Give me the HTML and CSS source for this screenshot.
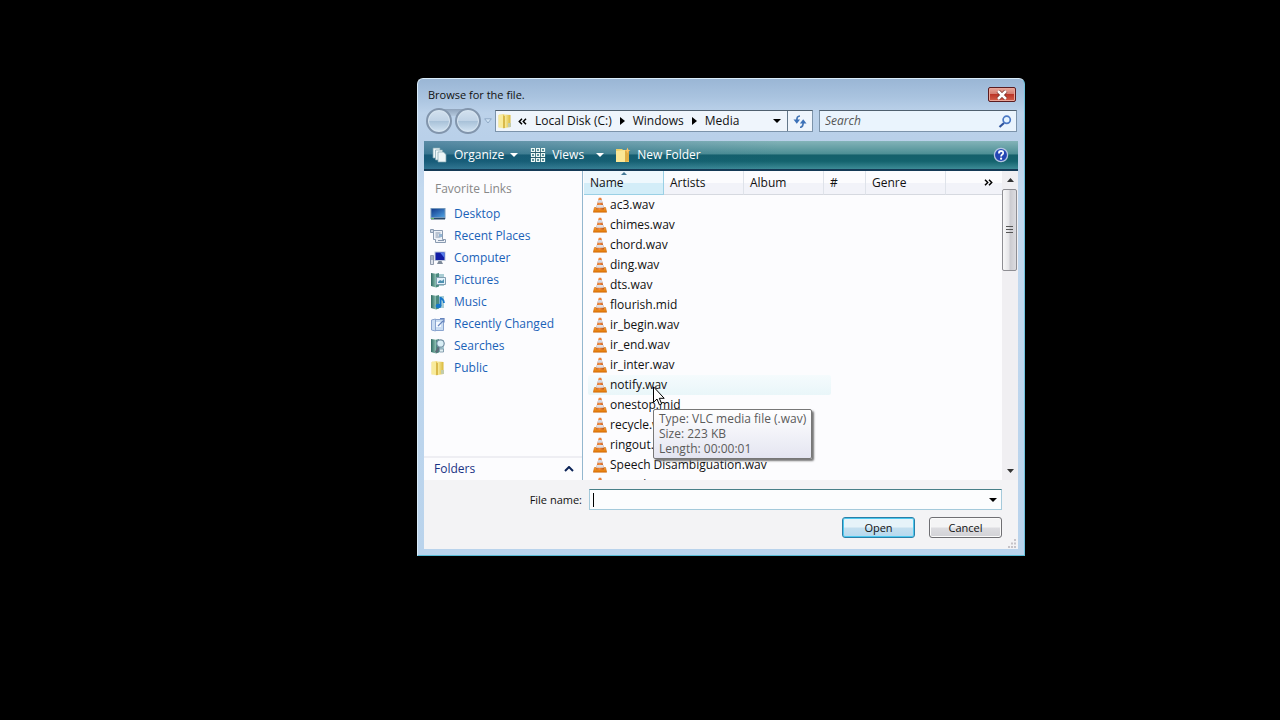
FILE: index.html
```html
<!DOCTYPE html>
<html lang="en">
<head>
<meta charset="utf-8">
<title>Browse for the file.</title>
<link rel="stylesheet" href="styles.css">
</head>
<body>
<svg class="defs" aria-hidden="true">
  <defs>
    <linearGradient id="cone" x1="0" x2="1"><stop offset="0" stop-color="#c86a30"/><stop offset=".45" stop-color="#f58a3c"/><stop offset="1" stop-color="#b9531c"/></linearGradient>
    <linearGradient id="base" x1="0" y1="0" x2="0" y2="1"><stop offset="0" stop-color="#f7a02c"/><stop offset="1" stop-color="#e07608"/></linearGradient>
    <linearGradient id="gold" x1="0" x2="1"><stop offset="0" stop-color="#f8eb9c"/><stop offset="1" stop-color="#d9b838"/></linearGradient>
    <linearGradient id="teal" x1="0" x2="1"><stop offset="0" stop-color="#2f6a62"/><stop offset="1" stop-color="#8fc3b4"/></linearGradient>
    <linearGradient id="screen" x1="0" x2="1" y2="1"><stop offset="0" stop-color="#123a8c"/><stop offset="1" stop-color="#4fa0e0"/></linearGradient>
  </defs>
  <symbol id="i-cone" viewBox="0 0 14 16">
    <path d="M1.500 10.500h11l1.200 4.700H.3z" fill="url(#base)" stroke="#d0690c" stroke-width=".6"/>
    <path d="M5.800.8h2.400l3 11.200c-1 1.200-7.400 1.200-8.400 0z" fill="url(#cone)"/>
    <path d="M5.300 3h3.400l.8 2.700h-5z" fill="#d5d8e2"/>
    <path d="M3.800 8h6.400l.7 2.700H3.100z" fill="#dfe0e6"/>
  </symbol>
  <symbol id="i-folder" viewBox="0 0 16 16">
    <path d="M1.500 2l6-1v13l-6 .5z" fill="#f2dc74"/>
    <path d="M2 1.500l4 .8v12.900L2 14z" fill="#f8eb9c"/>
    <path d="M6 2.300l2.500.7v12L6 15.200z" fill="#d9b94a"/>
    <path d="M8 1.500l5.500.5v12L8 15z" fill="url(#gold)"/>
    <path d="M11 10h3v4h-3z" fill="#c3ccaa"/>
  </symbol>
  <symbol id="i-book" viewBox="0 0 16 16">
    <path d="M1 1l5 .8v13.700L1 14z" fill="url(#teal)"/>
    <path d="M6 1.800L9 1v13.500l-3 1z" fill="#4c8a80"/>
    <path d="M9 2h5v12H9z" fill="#a9cdd4"/>
  </symbol>
</svg>

<section class="dialog" role="dialog" aria-labelledby="title">
  <header class="titlebar">
    <h1 id="title">Browse for the file.</h1>
    <button class="close" aria-label="Close"><svg width="12" height="10" viewBox="0 0 12 10"><path d="M2 1l8 8M10 1L2 9" stroke="#743029" stroke-width="4"/><path d="M2 1l8 8M10 1L2 9" stroke="#fff" stroke-width="2.500"/></svg></button>
  </header>

  <nav class="address-row" aria-label="Location">
    <div class="travel">
      <button class="orb" aria-label="Back"></button>
      <button class="orb" aria-label="Forward"></button>
      <button class="plain" aria-label="Recent pages"><svg width="8" height="6" viewBox="0 0 8 6"><path d="M.7.8h6.600L4 5z" fill="#cfe3f5" stroke="#8fa9c6"/></svg></button>
    </div>
    <div class="address">
      <svg class="icon" width="16" height="16"><use href="#i-folder"/></svg>
      <button class="plain crumb-more" aria-label="Parent folders"><svg width="9" height="7" viewBox="0 0 9 7"><path d="M4 .8L1.300 3.500 4 6.200M8 .8L5.300 3.500 8 6.200" fill="none" stroke="#000" stroke-width="1.500"/></svg></button>
      <a href="#">Local Disk (C:)</a>
      <svg width="5" height="8" viewBox="0 0 5 8"><path d="M0 0l5 4-5 4z"/></svg>
      <a href="#">Windows</a>
      <svg width="5" height="8" viewBox="0 0 5 8"><path d="M0 0l5 4-5 4z"/></svg>
      <a href="#">Media</a>
      <button class="plain history" aria-label="Previous locations"><svg width="8" height="4" viewBox="0 0 8 4"><path d="M0 0h8L4 4z"/></svg></button>
      <button class="plain refresh" aria-label="Refresh"><svg width="14" height="13" viewBox="0 0 14 13"><path d="M7 1C4.500 1 3.800 2.500 3.800 6" fill="none" stroke="#4173b4" stroke-width="1.700"/><path d="M.5 4.500h6.600L3.800 8.800z" fill="#3c71b8"/><path d="M7 12.300c2.500 0 3.200-1.500 3.200-5" fill="none" stroke="#4173b4" stroke-width="1.700"/><path d="M6.900 8.500h6.600l-3.300-4.300z" fill="#3c71b8"/></svg></button>
    </div>
    <div class="search">
      <input type="search" placeholder="Search" aria-label="Search">
      <svg width="14" height="13" viewBox="0 0 14 13"><path d="M6 8L1.500 12" stroke="#2e539c" stroke-width="2.200"/><circle cx="8.700" cy="4.800" r="3.600" fill="#e4f3ff" stroke="#4a78c4" stroke-width="1.700"/></svg>
    </div>
  </nav>

  <div class="toolbar" role="toolbar">
    <button class="tool organize">
      <svg width="16" height="16" viewBox="0 0 16 16"><g fill="#eef6f8" stroke="#80a5b0" stroke-width=".7"><path d="M1 1h7v10H1z"/><path d="M3.500 3h7v10h-7z"/><path d="M6 5h5.500L14 7.500V15H6z"/></g></svg>
      Organize
      <svg class="arrow" width="8" height="4" viewBox="0 0 8 4"><path d="M0 0h8L4 4z" fill="#fff"/></svg>
    </button>
    <button class="tool views">
      <svg width="16" height="16" viewBox="0 0 16 16"><path d="M1 1h14v14H1z" fill="#2b5f6d"/><g fill="#4c8791" stroke="#eef8f5" stroke-width="1.200"><path d="M1.500 1.500h3v3h-3zM6.500 1.500h3v3h-3zM11.500 1.500h3v3h-3zM1.500 6.500h3v3h-3zM6.500 6.500h3v3h-3zM11.500 6.500h3v3h-3zM1.500 11.500h3v3h-3zM6.500 11.500h3v3h-3zM11.500 11.500h3v3h-3z"/></g></svg>
      Views
      <svg class="arrow" width="8" height="4" viewBox="0 0 8 4"><path d="M0 0h8L4 4z" fill="#fff"/></svg>
    </button>
    <button class="tool">
      <svg width="16" height="16" viewBox="0 0 16 16"><path d="M1 2h6l1 1h6v12H1z" fill="#efd169"/><path d="M1 4l9-1v12H1z" fill="#fbe795"/><path d="M10 3h4v11l-4 1z" fill="#e0ae45"/><path d="M12.500.500l.8 2.200 2.200.8-2.200.8-.8 2.200-.8-2.200-2.200-.8 2.200-.8z" fill="#ffc566"/></svg>
      New Folder
    </button>
    <button class="plain help" aria-label="Help"><svg width="16" height="16" viewBox="0 0 16 16"><circle cx="8" cy="8" r="6.600" fill="#2445b4" stroke="#b6c6e2" stroke-width="1.300"/><path d="M5 4.500a4 3 0 0 1 6 0" fill="none" stroke="#7e9de5"/><path d="M5.900 6.400c0-3 4.300-2.900 4.300-.5 0 1.700-2.100 1.500-2.100 3.500" fill="none" stroke="#fff" stroke-width="1.700"/><circle cx="8.100" cy="11.700" r="1.100" fill="#fff"/></svg></button>
  </div>

  <div class="content">
    <aside class="sidebar">
      <h2>Favorite Links</h2>
      <ul>
        <li><a href="#"><svg width="16" height="16" viewBox="0 0 16 16"><path d="M.5 2h15v11H.5z" fill="#7498bb"/><path d="M1.500 3h13v8h-13z" fill="url(#screen)"/><path d="M1 12h14v1.500H1z" fill="#294867"/><path d="M1 12h3v1H1z" fill="#65b568"/></svg>Desktop</a></li>
        <li><a href="#"><svg width="16" height="16" viewBox="0 0 16 16"><path d="M3.500 2.500h9v9h3v3H5.500v-3h-2z" fill="#edf1f7" stroke="#8a9bb1"/><path d="M.5 1.500h3v3h-3z" fill="#cbd5e2" stroke="#8a9bb1"/><path d="M5.500 5h5M5.500 7h3M5.500 9h5M8 12.500h6" stroke="#8495ad"/><path d="M9 6h3v3H9z" fill="#93b4d2"/></svg>Recent Places</a></li>
        <li><a href="#"><svg width="16" height="16" viewBox="0 0 16 16"><path d="M.5 5.500h3v9h-3z" fill="#dce1ea" stroke="#8f9aac"/><path d="M1 7h2M1 9h2" stroke="#708099"/><path d="M4.500 1.500h11v9.500h-11z" fill="#bdc7da"/><path d="M5.500 2.500h9V10h-9z" fill="#111ca5"/><path d="M10 2.500h4.500V8z" fill="#547bea"/><path d="M8.500 11h3l1.500 3H7z" fill="#7d8999"/></svg>Computer</a></li>
        <li><a href="#"><svg width="16" height="16" viewBox="0 0 16 16"><use href="#i-book"/><path d="M6.500 5.500h9v7h-9z" fill="#e4f2fa" stroke="#819eaf"/><path d="M8 10l2-2 2 1 2-2v4H8z" fill="#4d91b1"/></svg>Pictures</a></li>
        <li><a href="#"><svg width="16" height="16" viewBox="0 0 16 16"><use href="#i-book"/><path d="M10.500 12V3c0 2 4 2 3.500 6" fill="none" stroke="#1677ca" stroke-width="1.800"/><ellipse cx="8.500" cy="12" rx="2.800" ry="2.200" fill="#1677ca"/></svg>Music</a></li>
        <li><a href="#"><svg width="16" height="16" viewBox="0 0 16 16"><path d="M1.500 4l4-1v12l-4-1zM5.500 3.500h8v11h-8z" fill="#c9dcf2" stroke="#8aa4cf"/><path d="M6 6h5v5H6z" fill="#f4f9ff"/><path d="M8 10l5-5M10 2.500h4v4" fill="none" stroke="#6684bd" stroke-width="1.200"/></svg>Recently Changed</a></li>
        <li><a href="#"><svg width="16" height="16" viewBox="0 0 16 16"><use href="#i-book"/><path d="M9 9L6 14.500" stroke="#5d6c79" stroke-width="2.500"/><circle cx="10.500" cy="5.500" r="3.700" fill="#d9eef5" stroke="#7590a3" stroke-width="1.200"/><path d="M9.500 11h4v3h-4z" fill="#e0eef1" stroke="#7590a3" stroke-width=".8"/></svg>Searches</a></li>
        <li><a href="#"><svg width="16" height="16"><use href="#i-folder"/></svg>Public</a></li>
      </ul>
      <button class="folders">Folders<svg width="10" height="6" viewBox="0 0 10 6"><path d="M1 5l4-4 4 4" fill="none" stroke="#0c2458" stroke-width="2"/></svg></button>
    </aside>

    <div class="listing">
      <table class="files">
        <thead>
          <tr><th class="c-name sorted">Name<svg class="sort" width="6" height="3" viewBox="0 0 6 3"><path d="M0 3l3-3 3 3z" fill="#477b98"/></svg></th><th class="c-artists">Artists</th><th class="c-album">Album</th><th class="c-num">#</th><th class="c-genre">Genre</th><th class="c-more"><button class="plain" aria-label="More columns"><svg width="9" height="7" viewBox="0 0 9 7"><path d="M1 .8l2.700 2.700L1 6.200M5 .8l2.700 2.700L5 6.200" fill="none" stroke="#000" stroke-width="1.500"/></svg></button></th></tr>
        </thead>
        <tbody>
          <tr><td colspan="6"><span class="file"><svg width="14" height="16"><use href="#i-cone"/></svg>ac3.wav</span></td></tr>
          <tr><td colspan="6"><span class="file"><svg width="14" height="16"><use href="#i-cone"/></svg>chimes.wav</span></td></tr>
          <tr><td colspan="6"><span class="file"><svg width="14" height="16"><use href="#i-cone"/></svg>chord.wav</span></td></tr>
          <tr><td colspan="6"><span class="file"><svg width="14" height="16"><use href="#i-cone"/></svg>ding.wav</span></td></tr>
          <tr><td colspan="6"><span class="file"><svg width="14" height="16"><use href="#i-cone"/></svg>dts.wav</span></td></tr>
          <tr><td colspan="6"><span class="file"><svg width="14" height="16"><use href="#i-cone"/></svg>flourish.mid</span></td></tr>
          <tr><td colspan="6"><span class="file"><svg width="14" height="16"><use href="#i-cone"/></svg>ir_begin.wav</span></td></tr>
          <tr><td colspan="6"><span class="file"><svg width="14" height="16"><use href="#i-cone"/></svg>ir_end.wav</span></td></tr>
          <tr><td colspan="6"><span class="file"><svg width="14" height="16"><use href="#i-cone"/></svg>ir_inter.wav</span></td></tr>
          <tr><td colspan="6"><div class="file hovered"><svg width="14" height="16"><use href="#i-cone"/></svg>notify.wav
            <div class="tooltip" role="tooltip">Type: VLC media file (.wav)<br>Size: 223 KB<br>Length: 00:00:01</div>
            <svg class="pointer" width="12" height="20" viewBox="0 0 12 20"><path d="M.5.8v15.500L4 13l2.400 5.800 2.300-1-2.400-5.500h4.900z" fill="#fff" stroke="#000"/></svg>
          </div></td></tr>
          <tr><td colspan="6"><span class="file"><svg width="14" height="16"><use href="#i-cone"/></svg>onestop.mid</span></td></tr>
          <tr><td colspan="6"><span class="file"><svg width="14" height="16"><use href="#i-cone"/></svg>recycle.wav</span></td></tr>
          <tr><td colspan="6"><span class="file"><svg width="14" height="16"><use href="#i-cone"/></svg>ringout.wav</span></td></tr>
          <tr><td colspan="6"><span class="file"><svg width="14" height="16"><use href="#i-cone"/></svg>Speech Disambiguation.wav</span></td></tr>
          <tr><td colspan="6"><span class="file"><svg width="14" height="16"><use href="#i-cone"/></svg>Speech Misrecognition.wav</span></td></tr>
        </tbody>
      </table>
    </div>

    <div class="scrollbar">
      <button class="plain" aria-label="Scroll up"><svg width="7" height="4" viewBox="0 0 7 4"><path d="M0 4l3.500-4L7 4z" fill="#333"/></svg></button>
      <div class="thumb"><svg width="7" height="8" viewBox="0 0 7 8"><path d="M0 .5h7M0 3.500h7M0 6.500h7" stroke="#555"/></svg></div>
      <button class="plain" aria-label="Scroll down"><svg width="7" height="4" viewBox="0 0 7 4"><path d="M0 0l3.500 4L7 0z" fill="#333"/></svg></button>
    </div>
  </div>

  <footer class="footer">
    <div class="name-row">
      <label for="filename">File name:</label>
      <div class="combo">
        <input id="filename" type="text">
        <span class="caret"></span>
        <button class="plain" aria-label="Show file names"><svg width="8" height="4" viewBox="0 0 8 4"><path d="M0 0h8L4 4z"/></svg></button>
      </div>
    </div>
    <div class="actions">
      <button class="push default">Open</button>
      <button class="push">Cancel</button>
    </div>
    <svg class="grip" width="9" height="9" viewBox="0 0 9 9"><path d="M7 0h2v2H7zM4 3.500h2v2H4zM7 3.500h2v2H7zM1 7h2v2H1zM4 7h2v2H4zM7 7h2v2H7z" fill="#c6c3c8"/></svg>
  </footer>
</section>
</body>
</html>
```
FILE: styles.css
```css
* { box-sizing: border-box; }

body {
  margin: 0;
  min-height: 100vh;
  background: #000;
  color: #111;
  font: 12px/16px "Open Sans", "Noto Sans", sans-serif;
}

svg { display: block; flex: none; }
a { color: inherit; text-decoration: none; }
button, input { font: inherit; color: inherit; }
.defs { position: absolute; width: 0; height: 0; }

.plain {
  display: flex;
  align-items: center;
  justify-content: center;
  padding: 0;
  border: 0;
  background: none;
}

.dialog {
  position: absolute;
  left: 417px;
  top: 78px;
  width: 47.5vw;
  min-width: 600px;
  padding: 0 6px 6px;
  border: 1px solid #d9ecfa;
  border-right-color: #6fc3de;
  border-bottom-color: #58bcd6;
  border-radius: 6px 6px 0 0;
  background: linear-gradient(#9ab6d5 0, #a9c3df 18px, #bcd2ea 34px, #b9d0e9 60px, #c3d9ef 110px, #b9d3ec 100%);
}

.titlebar {
  display: flex;
  justify-content: space-between;
  align-items: center;
  height: 31px;
  padding: 0 2px 0 4px;
}
.titlebar h1 { margin: 0; font-size: 11px; font-weight: 400; }
.close {
  display: flex;
  align-items: center;
  justify-content: center;
  width: 28px;
  height: 15px;
  padding: 0;
  border: 1px solid #5a1c20;
  border-radius: 2px;
  background: linear-gradient(#e6a79b 0, #d57d70 45%, #bb3527 50%, #d3604b 100%);
  box-shadow: inset 0 0 0 1px #e9a598;
}

.address-row {
  display: flex;
  align-items: center;
  height: 22px;
  margin-bottom: 9px;
  padding-right: 1px;
}
.travel {
  display: flex;
  align-items: center;
  gap: 3px;
  width: 71px;
  padding-left: 2px;
  background: linear-gradient(#8fa3bb, #b3c7dc) 14px 1px / 28px 7px no-repeat;
}
.orb {
  width: 26px;
  height: 26px;
  padding: 0;
  border: 2px solid #8295ac;
  border-radius: 50%;
  background: linear-gradient(#d3e1ef 0, #c0d3e6 48%, #a9c2d9 52%, #d3e4f3 100%);
  box-shadow: inset 0 0 0 1px #d6e4f0;
}
.address {
  display: flex;
  flex: 1;
  align-items: center;
  height: 22px;
  border: 1px solid #7c93aa;
  border-top-color: #50606f;
  background: #eff5fc;
}
.address .icon { margin: 0 5px 0 1px; }
.crumb-more { margin-right: 8px; }
.address a + svg { margin: 0 8px; }
.history { width: 20px; height: 20px; margin-left: auto; }
.refresh { width: 25px; height: 20px; border-left: 1px solid #63778a; }
.search {
  display: flex;
  align-items: center;
  width: 198px;
  height: 22px;
  margin-left: 6px;
  padding-right: 4px;
  border: 1px solid #7c93aa;
  border-top-color: #50606f;
  background: #eaf4fd;
}
.search input {
  flex: 1;
  min-width: 0;
  padding: 0 5px;
  border: 0;
  outline: 0;
  background: none;
}
.search input::placeholder { color: #555; font-style: italic; opacity: 1; }

.toolbar {
  display: flex;
  align-items: center;
  height: 30px;
  padding: 0 9px 0 8px;
  border-bottom: 2px solid #143a56;
  background:
    linear-gradient(90deg, #1d508a66 0, #1d508a00 60%),
    linear-gradient(#83b3b8 0, #4d8f95 46%, #14606b 50%, #14636e 72%, #3d8b96 100%);
  color: #fff;
}
.tool {
  display: flex;
  align-items: center;
  gap: 6px;
  padding: 0;
  border: 0;
  background: none;
}
.organize { margin-right: 12px; }
.views { margin-right: 11px; }
.views .arrow { margin-left: 6px; }
.help { margin-left: auto; }

.content { display: flex; height: 309px; background: #fcfcfe; }
.sidebar {
  display: flex;
  flex-direction: column;
  width: 159px;
  border-right: 1px solid #93b7cf;
}
.sidebar h2 {
  margin: 10px 0 6px 11px;
  color: #888;
  font-size: 12px;
  font-weight: 400;
}
.sidebar ul { margin: 0; padding: 0; list-style: none; }
.sidebar li a {
  display: flex;
  align-items: center;
  gap: 8px;
  height: 22px;
  padding-left: 6px;
  color: #1a62b8;
}
.folders {
  display: flex;
  align-items: center;
  justify-content: space-between;
  height: 24px;
  margin-top: auto;
  padding: 0 8px 0 10px;
  border: 0;
  border-top: 2px solid #eeeef3;
  background: none;
  color: #1a3384;
}

.listing { flex: 1; min-width: 0; padding-left: 1px; overflow: hidden; }
.files { width: 100%; border-collapse: separate; border-spacing: 0; table-layout: fixed; }
.files th {
  position: relative;
  height: 24px;
  padding: 0 6px;
  border-right: 1px solid #dfe3ea;
  border-bottom: 1px solid #d6d9e0;
  background: linear-gradient(#fcfcfe 50%, #f2f3f9 50%);
  font-weight: 400;
  text-align: left;
}
.files th.sorted {
  border-color: #9ad0e5;
  background: linear-gradient(#eff8fd 50%, #d3edf8 50%);
}
.sort { position: absolute; top: 1px; left: 50%; margin-left: -3px; }
.c-name, .c-artists, .c-album, .c-genre { width: 80px; }
.c-num { width: 42px; }
.files th.c-more { padding-right: 9px; border-right: 0; }
.c-more button { margin-left: auto; }
.files td { height: 20px; padding: 0 0 0 4px; }
.file {
  position: relative;
  display: flex;
  align-items: center;
  gap: 3px;
  width: 243px;
  height: 20px;
  padding-left: 5px;
}
.hovered {
  border-radius: 2px;
  background: linear-gradient(#f5fbfd, #e9f6f9);
}
.tooltip {
  position: absolute;
  z-index: 1;
  left: 65px;
  top: 34px;
  padding: 1px 5px 2px;
  border: 1px solid #777;
  border-radius: 2px;
  background: linear-gradient(#fff, #e4e5f1);
  box-shadow: 2px 2px 2px #777;
  color: #5b5b5b;
  line-height: 15px;
  white-space: nowrap;
}
.pointer { position: absolute; z-index: 2; left: 65px; top: 11px; }

.scrollbar {
  display: flex;
  flex-direction: column;
  width: 16px;
  background: #f0eff2;
}
.scrollbar .plain { height: 18px; }
.scrollbar .plain:last-child { margin-top: auto; }
.thumb {
  display: flex;
  align-items: center;
  justify-content: center;
  width: 15px;
  height: 82px;
  border: 1px solid #8e8e93;
  border-radius: 2px;
  background: linear-gradient(90deg, #f8f8f9 0, #e5e5e8 45%, #cbcbd0 55%, #dcdce0 100%);
}

.footer {
  position: relative;
  padding: 9px 16px 11px;
  background: #f3f3f5;
  font-size: 11px;
}
.name-row { display: flex; align-items: center; }
.name-row label { width: 165px; margin-left: -16px; padding-right: 7px; text-align: right; }
.combo {
  position: relative;
  display: flex;
  flex: 1;
  height: 21px;
  border: 1px solid #a5cadb;
  border-top-color: #477f88;
  background: #fcfdfe;
}
.combo input { flex: 1; min-width: 0; padding: 0 3px; border: 0; outline: 0; background: none; }
.combo .plain { width: 16px; }
.caret { position: absolute; left: 3px; top: 3px; width: 1px; height: 14px; background: #000; }
.actions { display: flex; justify-content: flex-end; gap: 14px; margin-top: 7px; }
.push {
  width: 73px;
  height: 21px;
  padding: 0;
  border: 1px solid #6f6f73;
  border-radius: 3px;
  background: linear-gradient(#f4f4f5 48%, #dcdce0 52%, #d2d2d6);
  box-shadow: inset 0 0 0 1px #fafafa;
  line-height: 17px;
}
.push.default {
  border-color: #2a7fa8;
  background: linear-gradient(#e6f3f9 48%, #c4dfef 52%, #b5d9ee);
  box-shadow: inset 0 0 0 1px #4cc8ee;
}
.grip { position: absolute; right: 2px; bottom: 1px; }
```
